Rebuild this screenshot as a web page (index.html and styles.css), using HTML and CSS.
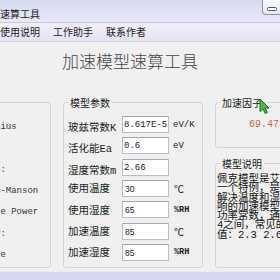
FILE: index.html
```html
<!DOCTYPE html>
<html lang="zh-CN">
<head>
<meta charset="utf-8">
<title>加速模型速算工具</title>
<link rel="stylesheet" href="styles.css">
</head>
<body>
<div class="window">
  <div class="titlebar">
    <span class="title">加速模型速算工具</span>
    <div class="controls">
      <span class="btn btn-min"><span class="glyph"></span></span>
      <span class="btn btn-max"></span>
      <span class="btn btn-close"></span>
    </div>
  </div>
  <div class="menubar">
    <span class="menu-item">使用说明</span>
    <span class="menu-item">工作助手</span>
    <span class="menu-item">联系作者</span>
  </div>
  <div class="client">
    <h1 class="heading">加速模型速算工具</h1>
    <div class="main">
      <fieldset class="group models">
        <legend>模型选择</legend>
        <ul class="model-list">
          <li><span class="radio"></span>Arrhenius</li>
          <li><span class="radio"></span>Eyring</li>
          <li><span class="radio"></span>Lawson:</li>
          <li><span class="radio"></span>Coffin-Manson</li>
          <li><span class="radio"></span>Inverse Power</li>
          <li><span class="radio"></span>Kemeny:</li>
          <li><span class="radio"></span>Voltage</li>
        </ul>
      </fieldset>
      <fieldset class="group params">
        <legend>模型参数</legend>
        <div class="form">
          <span class="label mix">玻兹常数K</span><span class="field">8.617E-5</span><span class="unit">eV/K</span>
          <span class="label mix">活化能Ea</span><span class="field">0.6</span><span class="unit">eV</span>
          <span class="label mix">湿度常数m</span><span class="field">2.66</span><span class="unit"></span>
          <span class="label">使用温度</span><span class="field sans">30</span><span class="unit deg">℃</span>
          <span class="label">使用湿度</span><span class="field sans">65</span><span class="unit rh">%RH</span>
          <span class="label">加速温度</span><span class="field sans">85</span><span class="unit deg">℃</span>
          <span class="label">加速湿度</span><span class="field sans">85</span><span class="unit rh">%RH</span>
        </div>
      </fieldset>
      <div class="side">
        <fieldset class="group factor">
          <legend>加速因子</legend>
          <div class="factor-value">69.4737</div>
        </fieldset>
        <fieldset class="group desc">
          <legend>模型说明</legend>
          <div class="desc-text">
            <div class="desc-line">佩克模型是艾林模型的</div>
            <div class="desc-line">一个特例，是目前用于</div>
            <div class="desc-line">解决温度和湿度共同影</div>
            <div class="desc-line">响的加速模型。m为湿度</div>
            <div class="desc-line">功率常数，通常在2到</div>
            <div class="desc-line">4之间，常见的取</div>
            <div class="desc-line">值：2.3 2.66 3.0</div>
          </div>
        </fieldset>
      </div>
    </div>
  </div>
  <div class="statusbar"></div>
  <svg class="cursor" width="11" height="17" viewBox="0 0 11 17" aria-hidden="true">
    <path d="M1 1 L1 13.5 L4 10.8 L6.3 15.6 L8.4 14.6 L6.2 10 L10 10 Z" fill="#43c043" stroke="#1f6a1f" stroke-width="1" stroke-linejoin="round"/>
  </svg>
</div>
</body>
</html>
```
FILE: styles.css
```css
html, body {
  margin: 0;
  padding: 0;
}
body {
  width: 280px;
  height: 280px;
  overflow: hidden;
  background: #f0f0f0;
  font-family: "Noto Sans CJK SC", sans-serif;
  color: #1c1c1c;
}
.window {
  position: relative;
  width: 358px;
  height: 280px;
  display: flex;
  flex-direction: column;
  background: #f0f0f0;
}

/* title bar */
.titlebar {
  height: 22px;
  flex: none;
  display: flex;
  align-items: flex-start;
  background: linear-gradient(#d6dcf0, #e6e8f6);
  border-bottom: 1px solid #c6c8dd;
}
.title {
  margin: 8px 0 0 -40px;
  font-size: 10px;
  line-height: 12px;
  color: #1c1c1c;
  white-space: nowrap;
}
.controls {
  margin-left: auto;
  display: flex;
}
.btn {
  height: 15px;
  box-sizing: border-box;
  border: 1px solid #8d93a8;
  border-top: none;
  background: linear-gradient(#f7f8fc, #e3e6f2);
}
.btn-min {
  width: 26px;
  border-radius: 0 0 0 4px;
  display: flex;
  align-items: flex-start;
  padding: 7px 0 0 4px;
}
.btn-max { width: 25px; border-left: none; }
.btn-close { width: 45px; border-left: none; border-radius: 0 0 4px 0; background: #c75050; }
.glyph {
  width: 10px;
  height: 4px;
  box-sizing: border-box;
  border: 1px solid #4f556a;
  border-radius: 1.5px;
  background: #fff;
}

/* menu */
.menubar {
  height: 18px;
  flex: none;
  display: flex;
  gap: 13px;
  background: linear-gradient(#f0eff9, #e5e3f4);
  border-bottom: 1px solid #d3d1e6;
}
.menu-item {
  font-size: 10px;
  line-height: 18px;
  color: #1c1c1c;
  white-space: nowrap;
}

/* client */
.client {
  flex: 1;
}
.heading {
  margin: 9px 0 0 62px;
  font-size: 17px;
  line-height: 20px;
  font-weight: 300;
  color: #454545;
  white-space: nowrap;
}
.main {
  display: flex;
  gap: 12px;
  margin: 25px 8px 0 -49px;
  height: 172px;
}

.group {
  margin: 0;
  box-sizing: border-box;
  border: 1px solid #d1d6dc;
  border-radius: 3px;
  min-width: 0;
}
.group legend {
  font-size: 10px;
  line-height: 13px;
  padding: 0 2px;
  color: #1c1c1c;
  white-space: nowrap;
}

/* left: model list */
.models {
  width: 100px;
  height: 172px;
  flex: none;
  padding: 9.5px 4px 0;
}
.model-list {
  list-style: none;
  margin: 0;
  padding: 0;
  display: flex;
  flex-direction: column;
  gap: 4.33px;
}
.model-list li {
  height: 17px;
  display: flex;
  align-items: center;
  font-family: "Liberation Mono", monospace;
  font-size: 9px;
  color: #34343e;
  white-space: nowrap;
}
.radio {
  width: 11px;
  height: 11px;
  margin-right: 1px;
  box-sizing: border-box;
  border: 1px solid #8a8f98;
  border-radius: 50%;
  background: #fff;
  flex: none;
}

/* middle: parameters */
.params {
  width: 140px;
  height: 172px;
  flex: none;
  padding: 7px 4px 0;
}
.form {
  display: grid;
  grid-template-columns: 54px 47px auto;
  grid-auto-rows: 17px;
  row-gap: 4.33px;
  align-items: center;
}
.label {
  font-size: 10.5px;
  line-height: 12px;
  white-space: nowrap;
  color: #1c1c1c;
}
.label.mix {
  font-family: "Liberation Mono", "Noto Sans CJK SC", monospace;
  align-self: end;
  margin-bottom: -1px;
}
.field {
  height: 17px;
  box-sizing: border-box;
  border: 1px solid #babec6;
  border-top-color: #a4a8b0;
  background: #fff;
  padding: 0 1px;
  font-family: "Liberation Mono", monospace;
  font-size: 9px;
  line-height: 16px;
  color: #1c1c1c;
  white-space: nowrap;
  overflow: hidden;
}
.field.sans {
  font-family: "Liberation Sans", sans-serif;
  font-size: 8.5px;
  padding-left: 2px;
}
.unit {
  padding-left: 4px;
  font-family: "Liberation Mono", monospace;
  font-size: 9px;
  color: #1c1c1c;
  white-space: nowrap;
}
.unit.deg {
  font-family: "Noto Sans CJK SC", sans-serif;
  font-size: 10px;
  padding-left: 5px;
}
.unit.rh {
  font-size: 8.5px;
  font-weight: bold;
  padding-left: 5px;
}

/* right column */
.side {
  flex: 1;
  display: flex;
  flex-direction: column;
  gap: 9px;
  min-width: 0;
}
.factor {
  height: 52px;
  flex: none;
  padding: 9px 1px 0;
}
.factor legend,
.desc legend {
  margin-left: 3px;
}
.factor-value {
  padding-left: 32px;
  font-family: "Liberation Mono", monospace;
  font-size: 10px;
  line-height: 14px;
  color: #c8673f;
  white-space: nowrap;
}
.desc {
  flex: 1;
  padding: 5px 1px 0;
  overflow: hidden;
}
.desc-line {
  font-family: "Liberation Mono", "Noto Sans CJK SC", monospace;
  font-size: 10.5px;
  line-height: 9.3px;
  white-space: nowrap;
  color: #141414;
}

.statusbar {
  height: 8px;
  flex: none;
  background: #d7d7f0;
  border-top: 1px solid #e9e9f7;
}

.cursor {
  position: absolute;
  left: 259px;
  top: 98px;
}
```
